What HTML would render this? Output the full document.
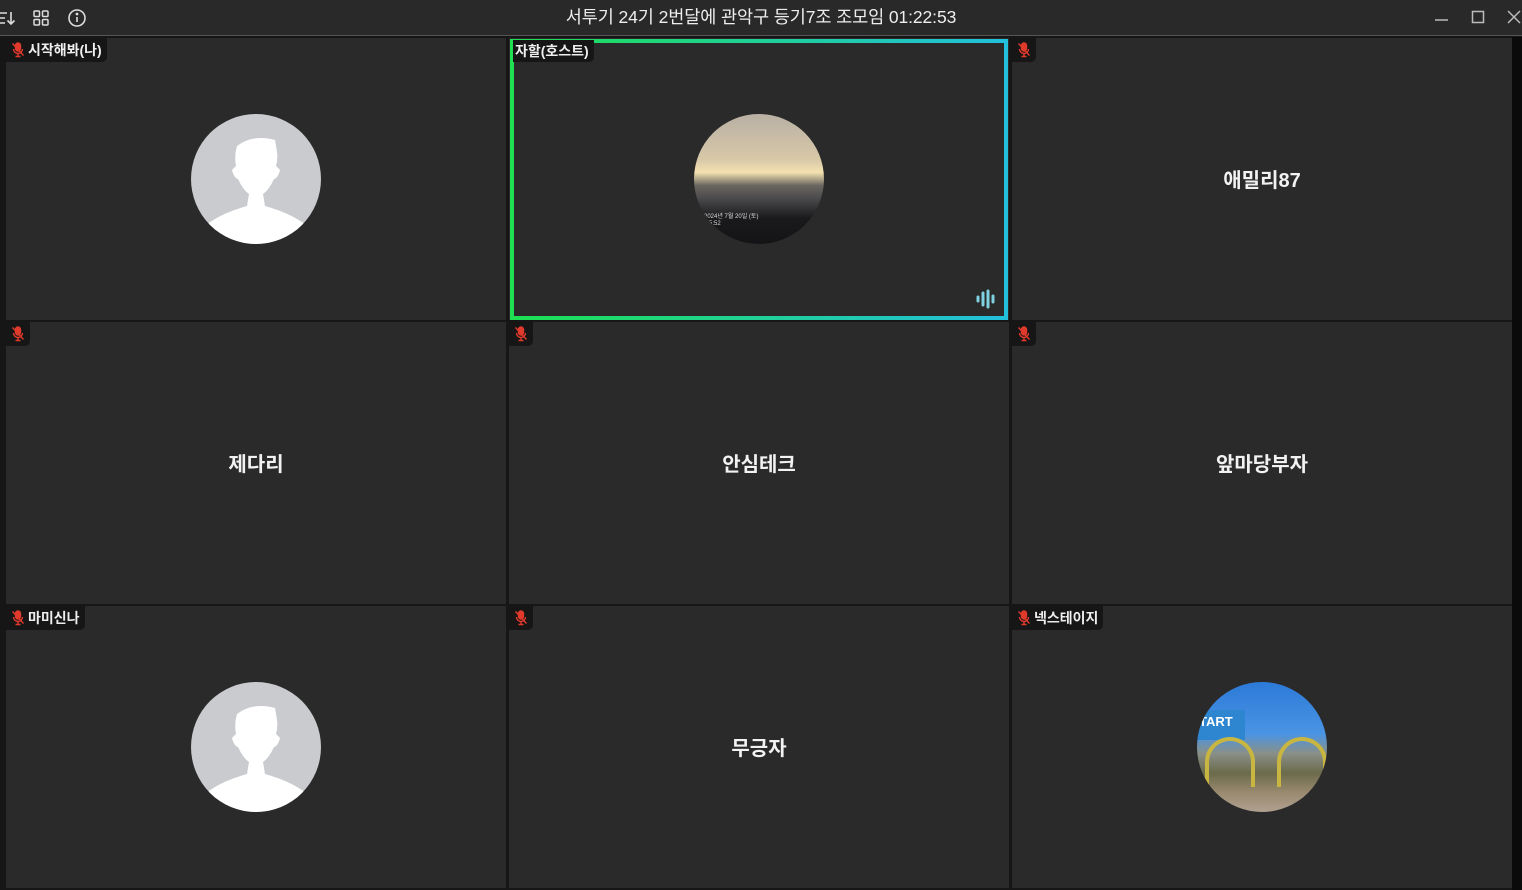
<!DOCTYPE html>
<html><head><meta charset="utf-8"><style>
*{margin:0;padding:0;box-sizing:border-box}
body{width:1522px;height:890px;background:#161616;position:relative;overflow:hidden;font-family:"Liberation Sans","Noto Sans CJK KR",sans-serif;color:#fff}
.bar{position:absolute;left:0;top:0;width:1522px;height:36px;background:#292929;border-bottom:1px solid #555}
.title{position:absolute;left:0;right:0;top:4px;text-align:center;font-size:17.5px;color:#eee;letter-spacing:-0.1px}
.tile{position:absolute;width:500px;height:282px;background:#2a2a2a}
.name{position:absolute;left:0;right:0;top:126px;text-align:center;font-size:20px;font-weight:bold;color:#f2f2f2}
.badge{position:absolute;left:0;top:0;height:24px;background:#161616;border-radius:0 0 5px 0;display:flex;align-items:center;padding:0 5px 0 5px;font-size:14px;font-weight:bold;color:#eee;gap:3px}
.av{position:absolute;left:185px;top:76px;width:130px;height:130px;border-radius:50%;overflow:hidden;background:#c9cbcf}
</style></head><body>
<div class="bar">
<svg style="position:absolute;left:0;top:9px" width="18" height="18" viewBox="0 0 18 18" stroke="#ddd" stroke-width="1.6" fill="none"><path d="M0 4h7M0 9h5M0 14h5M11 3v12M7.5 11.5 11 15l3.5-3.5"/></svg>
<svg style="position:absolute;left:32px;top:9px" width="18" height="18" viewBox="0 0 18 18" stroke="#ddd" stroke-width="1.5" fill="none"><rect x="2" y="2" width="5.5" height="5.5" rx="1"/><rect x="10.5" y="2" width="5.5" height="5.5" rx="1"/><rect x="2" y="10.5" width="5.5" height="5.5" rx="1"/><rect x="10.5" y="10.5" width="5.5" height="5.5" rx="1"/></svg>
<svg style="position:absolute;left:67px;top:8px" width="20" height="20" viewBox="0 0 20 20" stroke="#ddd" stroke-width="1.6" fill="none"><circle cx="10" cy="10" r="8"/><path d="M10 9v5"/><circle cx="10" cy="6" r=".6" fill="#ddd"/></svg>
<div class="title">서투기 24기 2번달에 관악구 등기7조 조모임 01:22:53</div>
<svg style="position:absolute;left:1434px;top:10px" width="16" height="16" stroke="#bbb" stroke-width="1.5"><path d="M1 10h13"/></svg>
<svg style="position:absolute;left:1471px;top:10px" width="16" height="16" stroke="#bbb" stroke-width="1.5" fill="none"><rect x="1.5" y="1.5" width="11" height="11"/></svg>
<svg style="position:absolute;left:1507px;top:10px" width="16" height="16" stroke="#bbb" stroke-width="1.5"><path d="M1 1l12 12M13 1 1 13"/></svg>
</div>
<div style="position:absolute;left:1512px;top:37px;width:10px;height:853px;background:#0a0a0a"></div>

<svg width="0" height="0" style="position:absolute"><defs>
<symbol id="mic" viewBox="0 0 14 16"><g stroke="#e03a2c" stroke-width="1.4" fill="none"><rect x="4.5" y="1" width="5" height="8" rx="2.5" fill="#e03a2c"/><path d="M2.5 7a4.5 4.5 0 0 0 9 0M7 11.5V14M4.5 14.5h5M1.5 1.5l11 12"/></g></symbol>
<symbol id="person" viewBox="0 0 130 130"><path d="M46 32 Q62 20 84 26 L86 38 Q87 46 85 52 L89 56 Q87 64 83 65 Q78 76 72 80 L74 92 Q102 100 116 112 L116 130 L14 130 L14 112 Q28 100 56 92 L58 80 Q52 76 47 65 Q43 64 41 56 L45 52 Q43 42 46 32Z" fill="#fff"/></symbol>
</defs></svg>

<div class="tile" style="left:6px;top:38px"><div class="av"><svg width="130" height="130"><use href="#person"/></svg></div><div class="badge"><svg width="14" height="16"><use href="#mic"/></svg>시작해봐(나)</div></div>

<div class="tile" style="left:509px;top:38px">
<div class="av" style="background:linear-gradient(180deg,#b8b0a4 0%,#d8c8a8 35%,#f4e2b0 45%,#6a6660 55%,#4a4a4c 65%,#1a1a1c 80%,#141416 100%)"><div style="position:absolute;left:10px;top:97px;font-size:6px;color:#ddd">2024년 7월 20일 (토)</div><div style="position:absolute;left:15px;top:107px;font-size:6px;color:#ddd">5:52</div></div>
<div style="position:absolute;left:1px;top:1px;width:498px;height:281px;border:4px solid transparent;border-image:linear-gradient(90deg,#1ee052,#22c0dc) 1"></div>
<div class="badge" style="left:4px;top:2px;height:22px;padding-left:2px">자할(호스트)</div>
<svg style="position:absolute;left:466px;top:250px" width="22" height="22" viewBox="0 0 22 22" stroke="#7fd0e0" stroke-linecap="round"><path d="M3 9v4" stroke-width="3"/><path d="M8 5v12M13 3v16" stroke-width="3"/><path d="M18 8v6" stroke-width="3"/></svg>
</div>

<div class="tile" style="left:1012px;top:38px"><div class="name">애밀리87</div><div class="badge"><svg width="14" height="16"><use href="#mic"/></svg></div></div>

<div class="tile" style="left:6px;top:322px"><div class="name">제다리</div><div class="badge"><svg width="14" height="16"><use href="#mic"/></svg></div></div>
<div class="tile" style="left:509px;top:322px"><div class="name">안심테크</div><div class="badge"><svg width="14" height="16"><use href="#mic"/></svg></div></div>
<div class="tile" style="left:1012px;top:322px"><div class="name">앞마당부자</div><div class="badge"><svg width="14" height="16"><use href="#mic"/></svg></div></div>

<div class="tile" style="left:6px;top:606px"><div class="av"><svg width="130" height="130"><use href="#person"/></svg></div><div class="badge"><svg width="14" height="16"><use href="#mic"/></svg>마미신나</div></div>
<div class="tile" style="left:509px;top:606px"><div class="name">무긍자</div><div class="badge"><svg width="14" height="16"><use href="#mic"/></svg></div></div>
<div class="tile" style="left:1012px;top:606px">
<div class="av" style="background:linear-gradient(180deg,#2c7ad8 0%,#4a94e4 40%,#8a9088 55%,#6b6a4a 70%,#9a8a70 85%,#b0a090 100%)">
<div style="position:absolute;left:0;top:28px;width:48px;height:30px;background:#2f86d0;font-size:13px;font-weight:bold;color:#fff;padding:4px 0 0 2px">TART</div>
<div style="position:absolute;left:8px;top:55px;width:50px;height:50px;border:4px solid #c8b640;border-radius:50% 50% 0 0;border-bottom:none"></div>
<div style="position:absolute;left:80px;top:55px;width:50px;height:50px;border:4px solid #c8b640;border-radius:50% 50% 0 0;border-bottom:none"></div>
</div>
<div class="badge"><svg width="14" height="16"><use href="#mic"/></svg>넥스테이지</div></div>
</body></html>
